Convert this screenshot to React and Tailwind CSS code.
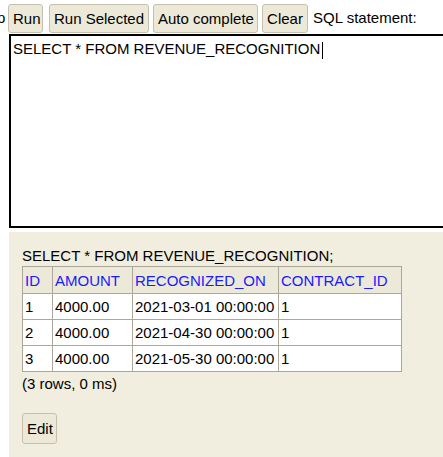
import React from 'react';

const ROWS = [
  { id: 1, amount: '4000.00', on: '2021-03-01 00:00:00', contract: 1 },
  { id: 2, amount: '4000.00', on: '2021-04-30 00:00:00', contract: 1 },
  { id: 3, amount: '4000.00', on: '2021-05-30 00:00:00', contract: 1 },
];

function Btn({ children, className = '' }) {
  return (
    <button className={`h-[29px] px-[4px] bg-[#ece9d8] border border-[#c5c1ae] rounded-[3px] text-[15px] text-black leading-none ${className}`}>
      {children}
    </button>
  );
}

export default function App() {
  const cell = 'border border-[#aca899] px-[2px] text-left font-normal';
  return (
    <div className="w-[443px] h-[457px] overflow-hidden bg-white flex flex-col font-['Liberation_Sans',Arial,sans-serif] text-[15px] text-black">
      {/* toolbar */}
      <div className="flex items-center h-[34px] pt-[4px] pb-[1px] whitespace-nowrap">
        <span className="-ml-[3px] w-[11px] shrink-0">p</span>
        <div className="flex items-center gap-[4px]">
          <Btn className="w-[35px]">Run</Btn>
          <Btn className="ml-[2px] w-[100px]">Run Selected</Btn>
          <Btn className="w-[105px]">Auto complete</Btn>
          <Btn className="w-[46px]">Clear</Btn>
          <span className="ml-[1px]">SQL statement:</span>
        </div>
      </div>

      {/* editor */}
      <div className="ml-[9px] w-[460px] h-[194px] shrink-0 border-2 border-black border-r-0 px-[2px] pt-[2px] whitespace-nowrap">
        SELECT * FROM REVENUE_RECOGNITION<span className="inline-block w-px h-[17px] bg-black align-middle ml-[2px]" />
      </div>

      {/* result panel */}
      <div className="ml-[9px] mt-[4px] flex-1 bg-[#f1eedf] pl-[13px] pt-[14px]">
        <div className="leading-[19px]">SELECT * FROM REVENUE_RECOGNITION;</div>
        <table className="border-collapse border border-[#aca899] mt-[1px] leading-[17px] bg-white">
          <thead>
            <tr className="bg-[#ece9d8] text-[#1a1aff] h-[27px]">
              <th className={`${cell} w-[30px]`}>ID</th>
              <th className={`${cell} w-[80px]`}>AMOUNT</th>
              <th className={`${cell} w-[146px]`}>RECOGNIZED_ON</th>
              <th className={`${cell} w-[123px]`}>CONTRACT_ID</th>
            </tr>
          </thead>
          <tbody>
            {ROWS.map(r => (
              <tr key={r.id} className="h-[26px]">
                <td className={cell}>{r.id}</td>
                <td className={cell}>{r.amount}</td>
                <td className={cell}>{r.on}</td>
                <td className={cell}>{r.contract}</td>
              </tr>
            ))}
          </tbody>
        </table>
        <div className="mt-[2px] leading-[19px]">(3 rows, 0 ms)</div>
        <Btn className="mt-[20px] h-[31px] w-[35px]">Edit</Btn>
      </div>
    </div>
  );
}
